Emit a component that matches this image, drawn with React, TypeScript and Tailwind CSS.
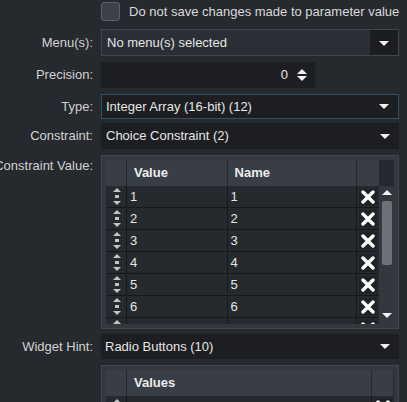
import React from "react";

const Down = ({ c = "#f0f0f0" }: { c?: string }) => (
  <svg width="10" height="5" viewBox="0 0 10 5"><polygon points="0,0 10,0 5,5" fill={c} /></svg>
);
const Up = ({ c = "#f0f0f0" }: { c?: string }) => (
  <svg width="10" height="5" viewBox="0 0 10 5"><polygon points="0,5 10,5 5,0" fill={c} /></svg>
);

const Grip = () => (
  <svg width="8" height="17" viewBox="0 0 8 17">
    <polygon points="0,4 8,4 4,0" fill="#c4c4c4" />
    <rect x="2" y="7" width="4" height="3" fill="#c4c4c4" />
    <polygon points="0,13 8,13 4,17" fill="#c4c4c4" />
  </svg>
);

const XIcon = () => (
  <div className="w-[18px] h-[18px] bg-[#202226] flex items-center justify-center rounded-[2px]">
    <svg width="14" height="14" viewBox="0 0 14 14">
      <path d="M2 2 L12 12 M12 2 L2 12" stroke="#ffffff" strokeWidth="3.4" strokeLinecap="round" />
    </svg>
  </div>
);

const Label = ({ children, top }: { children: React.ReactNode; top?: boolean }) => (
  <div className={`w-[93px] shrink-0 flex justify-end ${top ? "items-start pt-[1px]" : "items-center"}`}>
    <span className="whitespace-nowrap text-[#d2d2d2]">{children}</span>
  </div>
);

const Row = ({ n }: { n: number }) => (
  <div className="flex h-[22px] shrink-0 border-b border-[#16181b] bg-[#26292d]">
    <div className="w-[21px] flex items-center justify-center pl-[2px] border-r border-[#16181b]"><Grip /></div>
    <div className="w-[101px] pl-[3px] flex items-center border-r border-[#16181b] text-[#e6e6e6]">{n}</div>
    <div className="w-[130px] pl-[3px] flex items-center border-r border-[#16181b] text-[#e6e6e6]">{n}</div>
    <div className="w-[22px] flex items-center justify-center"><XIcon /></div>
  </div>
);

export default function App() {
  return (
    <div className="w-[407px] h-[402px] overflow-hidden bg-[#26292e] font-['Liberation_Sans',Arial,sans-serif] text-[13px] text-[#d2d2d2] pt-[2px]">
      {/* checkbox */}
      <div className="flex h-[19px] items-center">
        <div className="w-[101px]" />
        <div className="w-[19px] h-[19px] rounded-[3px] bg-[#3c4049] border-[1.5px] border-[#5d616b]" />
        <span className="ml-[9px] whitespace-nowrap text-[#dadada]">Do not save changes made to parameter value</span>
      </div>

      {/* Menus */}
      <div className="flex h-[27px] mt-[8px] gap-[8px]">
        <Label>Menu(s):</Label>
        <div className="w-[298px] flex border border-[#41454d] bg-[#2b2e34]">
          <div className="flex-1 flex items-center pl-[5px] text-[#e6e6e6]">No menu(s) selected</div>
          <div className="w-[28px] bg-[#1c1d20] flex items-center justify-center pt-[1px]"><Down /></div>
        </div>
      </div>

      {/* Precision */}
      <div className="flex h-[26px] mt-[6px] gap-[8px]">
        <Label>Precision:</Label>
        <div className="w-[214px] flex items-center justify-end bg-[#1d1e21] pr-[8px]">
          <span className="text-[#e6e6e6] mr-[9px]">0</span>
          <div className="flex flex-col gap-[2px]"><Up /><Down /></div>
        </div>
      </div>

      {/* Type */}
      <div className="flex h-[25px] mt-[6px] gap-[8px]">
        <Label>Type:</Label>
        <div className="w-[298px] flex items-center border border-[#2f5166] bg-[#1d1e21] pl-[4px]">
          <span className="flex-1 text-[#e6e6e6]">Integer Array (16-bit) (12)</span>
          <div className="w-[28px] flex items-center justify-center"><Down /></div>
        </div>
      </div>

      {/* Constraint */}
      <div className="flex h-[26px] mt-[4px] gap-[8px]">
        <Label>Constraint:</Label>
        <div className="w-[298px] flex items-center bg-[#1d1e21] pl-[5px]">
          <span className="flex-1 text-[#e6e6e6]">Choice Constraint (2)</span>
          <div className="w-[28px] flex items-center justify-center"><Down /></div>
        </div>
      </div>

      {/* Constraint Value table */}
      <div className="flex h-[174px] mt-[6px] gap-[8px]">
        <Label top>Constraint Value:</Label>
        <div className="w-[298px] border border-[#42464e] bg-[#33373e] p-[4px]">
          <div className="flex h-full">
            <div className="w-[274px] flex flex-col overflow-hidden">
              <div className="flex h-[26px] shrink-0 bg-[#383d46] font-bold text-[#ececec]">
                <div className="w-[21px] border-r border-[#25282c]" />
                <div className="w-[101px] pl-[7px] flex items-center border-r border-[#25282c]">Value</div>
                <div className="w-[130px] pl-[7px] flex items-center border-r border-[#25282c]">Name</div>
                <div className="w-[22px]" />
              </div>
              {[1, 2, 3, 4, 5, 6, 7].map((n) => (
                <Row key={n} n={n} />
              ))}
            </div>
            <div className="w-[15px] flex flex-col">
              <div className="h-[26px] bg-[#25282c]" />
              <div className="flex-1 bg-[#33373e] flex flex-col items-center">
                <div className="mt-[4px]"><Up c="#f2f2f2" /></div>
                <div className="mt-[6px] w-[10px] h-[64px] rounded-[2px] bg-[#6d717b]" />
                <div className="flex-1" />
                <div className="mb-[6px]"><Down c="#f2f2f2" /></div>
              </div>
            </div>
          </div>
        </div>
      </div>

      {/* Widget Hint */}
      <div className="flex h-[25px] mt-[5px] gap-[8px]">
        <Label>Widget Hint:</Label>
        <div className="w-[298px] flex items-center bg-[#1d1e21] pl-[4px]">
          <span className="flex-1 text-[#e6e6e6]">Radio Buttons (10)</span>
          <div className="w-[28px] flex items-center justify-center"><Down /></div>
        </div>
      </div>

      {/* Values table */}
      <div className="flex h-[60px] mt-[6px] gap-[8px]">
        <div className="w-[93px]" />
        <div className="w-[298px] border border-[#42464e] bg-[#33373e] p-[4px]">
          <div className="flex flex-col w-[288px]">
            <div className="flex h-[26px] shrink-0 bg-[#383d46] font-bold text-[#ececec]">
              <div className="w-[21px] border-r border-[#25282c]" />
              <div className="w-[245px] pl-[7px] flex items-center border-r border-[#25282c]">Values</div>
              <div className="w-[22px] border-r border-[#25282c]" />
            </div>
            <div className="flex h-[22px] bg-[#26292d]">
              <div className="w-[21px] flex items-center justify-center pl-[2px] border-r border-[#16181b]"><Grip /></div>
              <div className="w-[245px] pl-[3px] flex items-center border-r border-[#16181b] text-[#e6e6e6]">1</div>
              <div className="w-[22px] flex items-center justify-center"><XIcon /></div>
            </div>
          </div>
        </div>
      </div>
    </div>
  );
}
